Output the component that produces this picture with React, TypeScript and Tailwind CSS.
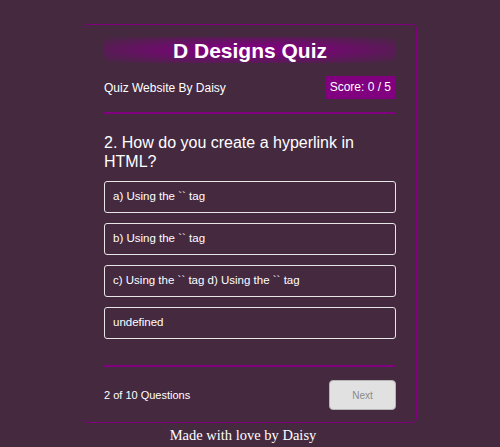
import React from "react";

const options = [
  "a) Using the `` tag",
  "b) Using the `` tag",
  "c) Using the `` tag d) Using the `` tag",
  "undefined",
];

const App = () => {
  return (
    <div className="min-h-screen bg-[#44293f] pt-[24px] font-['Liberation_Sans',Arial,sans-serif] text-white">
      <div className="mx-auto w-[334px] rounded-[5px] border-[1.5px] border-[#800080] px-[20px] pb-[12px] pt-[12px]">
        {/* Title */}
        <div className="flex h-[26px] items-center justify-center rounded-[6px] bg-[radial-gradient(ellipse_at_center,#800080_15%,transparent_100%)]">
          <h1 className="text-[21px] font-bold leading-none">D Designs Quiz</h1>
        </div>

        {/* Header */}
        <div className="mt-[13px] flex items-center justify-between">
          <p className="text-[12px]">Quiz Website By Daisy</p>
          <span className="bg-[#800080] px-[5px] py-[4px] text-[12px] leading-[15px]">
            Score: 0 / 5
          </span>
        </div>
        <div className="mt-[13px] h-[2px] bg-[#800080]" />

        {/* Question */}
        <h2 className="mt-[19px] text-[16px] leading-[19px]">
          2. How do you create a hyperlink in HTML?
        </h2>

        <div className="mt-[10px] flex flex-col gap-[10px]">
          {options.map((opt, i) => (
            <button
              key={i}
              className="flex h-[32px] items-center rounded-[3px] border-[1.5px] border-[#e6e6e6] px-[8px] text-left text-[11.5px] text-white"
            >
              {opt}
            </button>
          ))}
        </div>

        <div className="mt-[26px] h-[2px] bg-[#800080]" />

        {/* Footer */}
        <div className="mt-[13px] flex items-center justify-between">
          <p className="text-[11px]">2 of 10 Questions</p>
          <button
            disabled
            className="h-[30px] w-[67px] rounded-[4px] border border-[#b5b5b5] bg-[#e1e1e1] text-[10px] text-[#8a8a8a]"
          >
            Next
          </button>
        </div>
      </div>
      <p className="mt-[2px] pr-[14px] text-center font-['Liberation_Serif','Times_New_Roman',serif] text-[14.5px]">
        Made with love by Daisy
      </p>
    </div>
  );
};

export default App;
